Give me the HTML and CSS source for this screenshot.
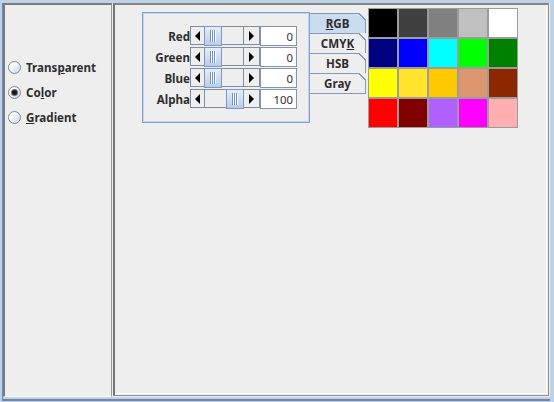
FILE: index.html
```html
<!DOCTYPE html>
<html>
<head>
<meta charset="utf-8">
<link rel="stylesheet" href="styles.css">
</head>
<body>
<div class="window">
  <div class="frame">
    <div class="left-pane">
      <label class="radio"><span class="dot"></span>Trans<u>p</u>arent</label>
      <label class="radio checked"><span class="dot"></span>Co<u>l</u>or</label>
      <label class="radio"><span class="dot"></span><u>G</u>radient</label>
    </div>
    <div class="divider"></div>
    <div class="right-pane">
      <div class="right-inner">
        <div class="chooser">
          <div class="sliders">
            <div class="row">
              <span class="lbl">Red</span>
              <div class="slider"><span class="btn left"></span><span class="track"><span class="thumb" style="left:-1px"></span></span><span class="btn right"></span></div>
              <span class="field">0</span>
            </div>
            <div class="row">
              <span class="lbl">Green</span>
              <div class="slider"><span class="btn left"></span><span class="track"><span class="thumb" style="left:-1px"></span></span><span class="btn right"></span></div>
              <span class="field">0</span>
            </div>
            <div class="row">
              <span class="lbl">Blue</span>
              <div class="slider"><span class="btn left"></span><span class="track"><span class="thumb" style="left:-1px"></span></span><span class="btn right"></span></div>
              <span class="field">0</span>
            </div>
            <div class="row">
              <span class="lbl">Alpha</span>
              <div class="slider"><span class="btn left"></span><span class="track"><span class="thumb" style="left:21px"></span></span><span class="btn right"></span></div>
              <span class="field">100</span>
            </div>
          </div>
          <div class="tabs">
            <div class="tab sel"><u>R</u>GB</div>
            <div class="tab">CMY<u>K</u></div>
            <div class="tab">HSB</div>
            <div class="tab">Gray</div>
          </div>
          <div class="swatches">
            <span style="background:#000000"></span>
            <span style="background:#404040"></span>
            <span style="background:#808080"></span>
            <span style="background:#c0c0c0"></span>
            <span style="background:#ffffff"></span>
            <span style="background:#000080"></span>
            <span style="background:#0000ff"></span>
            <span style="background:#00ffff"></span>
            <span style="background:#00ff00"></span>
            <span style="background:#008000"></span>
            <span style="background:#ffff00"></span>
            <span style="background:#ffe42b"></span>
            <span style="background:#ffc800"></span>
            <span style="background:#dc9670"></span>
            <span style="background:#8b2800"></span>
            <span style="background:#ff0000"></span>
            <span style="background:#800000"></span>
            <span style="background:#b060ff"></span>
            <span style="background:#ff00ff"></span>
            <span style="background:#ffafaf"></span>
          </div>
        </div>
      </div>
    </div>
  </div>
</div>
</body>
</html>
```

FILE: styles.css
```css
* { box-sizing: border-box; }
html, body { margin: 0; padding: 0; }
body {
  width: 554px;
  height: 402px;
  overflow: hidden;
  font-family: "Noto Sans", "DejaVu Sans", sans-serif;
  font-size: 11px;
  color: #2e2e2e;
}
u { text-decoration: underline; text-decoration-thickness: 1px; text-underline-offset: 1px; }

.window {
  width: 554px;
  height: 402px;
  background: #bdd3ea;
  padding: 3px 4px 1px 2px;
  display: flex;
}
.frame {
  flex: 1;
  display: flex;
  background: #eeeeee;
  border-left: 1px solid #6c89bb;
  border-bottom: 2px solid #6f86a6;
  padding-bottom: 2px;
  box-shadow: inset 0 -2px 0 #bdd3ea;
}

.left-pane {
  width: 109px;
  border-top: 2px solid #7b7b7b;
  border-left: 2px solid #7b7b7b;
  border-right: 1px solid #9b9b9b;
  border-bottom: 1px solid #ffffff;
  padding: 50px 0 0 3px;
}
.radio {
  display: flex;
  align-items: center;
  height: 25px;
  font-weight: bold;
  font-size: 11.6px;
  white-space: nowrap;
}
.dot {
  width: 13px;
  height: 13px;
  border-radius: 50%;
  border: 1px solid #7b8a9a;
  background: linear-gradient(135deg, #ffffff 25%, #c8d4e2);
  margin-right: 5px;
  position: relative;
  flex: none;
}
.checked .dot::after {
  content: "";
  position: absolute;
  left: 3px;
  top: 3px;
  width: 5px;
  height: 5px;
  border-radius: 50%;
  background: #1a1a1a;
  box-shadow: 0 0 0 1px #6d6d6d;
}

.divider { width: 1px; }

.right-pane {
  flex: 1;
  display: flex;
  margin: 0 1px 1px 0;
  border-top: 2px solid #858585;
  border-left: 2px solid #767676;
  border-right: 1px solid #8c8c8c;
  border-bottom: 1px solid #8c8c8c;
}
.right-inner {
  flex: 1;
  margin: 0 1px 1px 0;
  border-right: 1px solid #ffffff;
  border-bottom: 1px solid #ffffff;
}
.chooser {
  display: flex;
  align-items: flex-start;
  padding-left: 27px;
}

.sliders {
  margin-top: 7px;
  width: 168px;
  height: 111px;
  border: 1px solid #7f9fd5;
  box-shadow: inset 0 0 0 1px #c4d4ee;
  padding: 13px 12px 0 0;
}
.row {
  display: flex;
  align-items: flex-start;
  height: 21px;
}
.lbl {
  width: 47px;
  text-align: right;
  font-weight: bold;
  font-size: 11.6px;
  line-height: 21px;
  height: 19px;
  white-space: nowrap;
}
.slider {
  width: 70px;
  height: 19px;
  border: 1px solid #7d8ea0;
  display: flex;
}
.btn {
  display: flex;
  align-items: center;
  justify-content: center;
}
.btn.left { width: 14px; border-right: 1px solid #7d8ea0; }
.btn.right { width: 16px; border-left: 1px solid #7d8ea0; }
.btn.left::before {
  content: "";
  border-style: solid;
  border-width: 5px 5px 5px 0;
  border-color: transparent #000000 transparent transparent;
}
.btn.right::before {
  content: "";
  border-style: solid;
  border-width: 5px 0 5px 5px;
  border-color: transparent transparent transparent #000000;
}
.track {
  width: 38px;
  position: relative;
}
.thumb {
  position: absolute;
  top: -1px;
  bottom: -2px;
  width: 18px;
  border: 1px solid #7b98c8;
  background: linear-gradient(#e6eef8, #b9cde6);
  display: flex;
  align-items: center;
  justify-content: center;
  z-index: 1;
}
.thumb::before {
  content: "";
  width: 6px;
  height: 12px;
  background: repeating-linear-gradient(90deg, #6f8fca 0 1px, #ffffff 1px 2px);
}
.field {
  width: 37px;
  height: 20px;
  border: 1px solid #8596a8;
  background: #ffffff;
  text-align: right;
  padding-right: 3px;
  line-height: 19px;
  font-size: 11.3px;
}

.tabs {
  margin-top: 8px;
  width: 56px;
  display: flex;
  flex-direction: column;
}
.tab {
  position: relative;
  height: 20px;
  border-top: 1px solid #8598ba;
  border-right: 1px solid #8598ba;
  text-align: center;
  font-weight: bold;
  font-size: 11.6px;
  line-height: 20px;
}
.tab:last-child {
  height: 21px;
  border-bottom: 1px solid #8598ba;
}
.tab.sel { background: #c9dcf0; }
.tab::after {
  content: "";
  position: absolute;
  top: -1px;
  right: -1px;
  width: 7px;
  height: 7px;
  background: linear-gradient(to bottom left, #eeeeee 0 45%, #8598ba 45% 62%, transparent 62%);
}

.swatches {
  margin: 3px 0 0 2px;
  display: grid;
  grid-template-columns: repeat(5, 28px);
  grid-auto-rows: 28px;
  gap: 2px;
  padding: 1px;
  background: #9c9c9c;
}
```
